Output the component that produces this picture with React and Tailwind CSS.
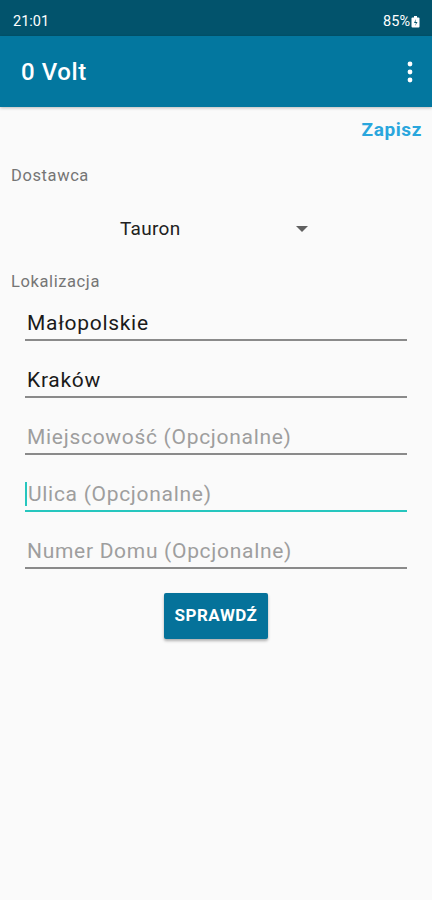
export default function App() {
  const fields = [
    { value: "Małopolskie", filled: true },
    { value: "Kraków", filled: true },
    { value: "Miejscowość (Opcjonalne)", filled: false },
    { value: "Ulica (Opcjonalne)", filled: false, focused: true },
    { value: "Numer Domu (Opcjonalne)", filled: false },
  ];

  return (
    <div
      className="w-[432px] h-[900px] bg-[#fafafa] flex flex-col"
      style={{ fontFamily: "Roboto, 'Liberation Sans', sans-serif" }}
    >
      <div className="h-[36px] bg-[#02536c] flex items-end justify-between pl-[13px] pr-[12px] pb-[3px] text-white text-[14.5px]">
        <span>21:01</span>
        <span className="flex items-center gap-[1px]">
          85%
          <svg width="9" height="12" viewBox="0 0 9 12">
            <rect x="0.5" y="1.5" width="8" height="10" rx="1" fill="white" />
            <rect x="3" y="0" width="3" height="2" fill="white" />
            <path d="M5 3 L3 7 H5 L4 10 L6.5 6 H4.5 Z" fill="#02536c" />
          </svg>
        </span>
      </div>

      <div className="h-[71px] bg-[#03779f] flex items-center justify-between pl-[21px] pr-[18px] shadow-[0_1px_3px_rgba(0,0,0,0.25)]">
        <span className="text-white text-[24px] font-medium tracking-[0.6px]">0 Volt</span>
        <svg width="8" height="22" viewBox="0 0 8 22">
          <circle cx="4" cy="3" r="2.4" fill="white" />
          <circle cx="4" cy="11" r="2.4" fill="white" />
          <circle cx="4" cy="19" r="2.4" fill="white" />
        </svg>
      </div>

      <div className="h-[46px] flex items-center justify-end pr-[10px]">
        <span className="text-[#29a6dd] text-[19px] font-bold tracking-[0.6px]">Zapisz</span>
      </div>

      <div className="h-[46px] flex items-center pl-[11px] text-[16.5px] text-[#757575] tracking-[0.6px]">
        Dostawca
      </div>

      <div className="h-[60px] flex items-center pl-[120px]">
        <span className="text-[19px] text-[#212121] tracking-[0.3px]">Tauron</span>
        <svg className="ml-[116px]" width="12" height="6" viewBox="0 0 12 6">
          <path d="M0 0 H12 L6 6 Z" fill="#606060" />
        </svg>
      </div>

      <div className="h-[46px] flex items-center pl-[11px] text-[16.5px] text-[#757575] tracking-[0.6px]">
        Lokalizacja
      </div>

      <div className="flex flex-col px-[25px]">
        {fields.map((f, i) => (
          <div
            key={f.value}
            className={`${i === 0 ? "h-[36px]" : "h-[57px]"} flex items-end pb-[3px] border-b-2 ${
              f.focused ? "border-[#26c6be]" : "border-[#8a8a8a]"
            }`}
          >
            {f.focused && <span className="w-[2px] h-[24px] mb-[1px] bg-[#26c6be] mr-[-1px]" />}
            <span
              className={`text-[21px] leading-[26px] pl-[2px] tracking-[0.7px] ${
                f.filled ? "text-[#1a1a1a]" : "text-[#9e9e9e]"
              }`}
            >
              {f.value}
            </span>
          </div>
        ))}
      </div>

      <div className="flex justify-center mt-[24px]">
        <button className="w-[104px] h-[46px] bg-[#05729a] text-white text-[17px] font-bold tracking-[0.5px] rounded-[2px] shadow-[0_2px_3px_rgba(0,0,0,0.3)]">
          SPRAWDŹ
        </button>
      </div>
    </div>
  );
}
